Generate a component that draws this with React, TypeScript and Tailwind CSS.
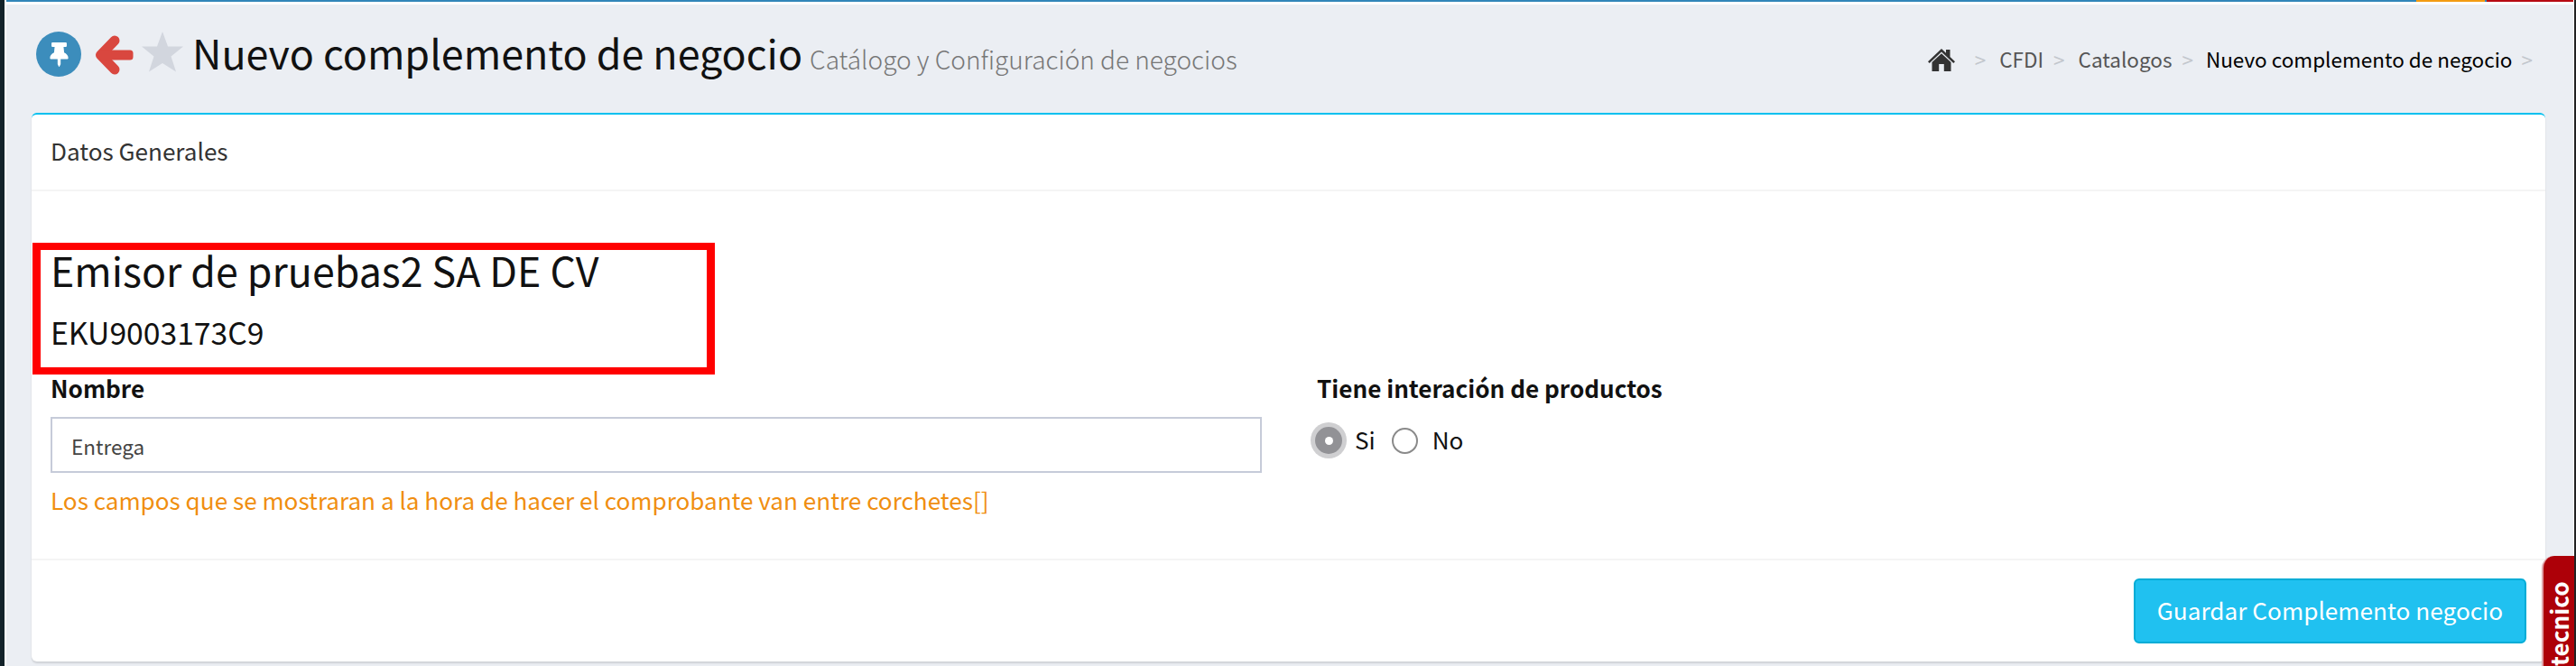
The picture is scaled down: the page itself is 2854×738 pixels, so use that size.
import React from "react";
import { FaThumbtack } from "react-icons/fa";

const crumbs = ["CFDI", "Catalogos"];

const Separator = () => <span className="text-[#c3c7cd]">&gt;</span>;

const ArrowIcon = () => (
  <svg className="mt-[4px] ml-[15px] h-[44px] w-[43px]" viewBox="0 0 43 44">
    <path
      d="M22 6L6.500 22l15.500 16"
      fill="none"
      stroke="#d9473f"
      strokeWidth="11"
      strokeLinecap="round"
      strokeLinejoin="round"
    />
    <path d="M7 16.500h32a3.500 3.500 0 0 1 3.500 3.500v4a3.500 3.500 0 0 1-3.500 3.500H7z" fill="#d9473f" />
  </svg>
);

const StarIcon = () => (
  <svg className="ml-[9px] h-[45px] w-[46px]" viewBox="0 0 46 45">
    <path
      d="M23 0l6 16.500h17L32.500 27.500l5.500 17L23 35 8 44.500l5.500-17L0 16.500h17z"
      fill="#d2d6de"
    />
  </svg>
);

const HomeIcon = () => (
  <svg className="mt-[5px] h-[25px] w-[30px]" viewBox="0 0 30 25" fill="#333">
    <path d="M15 0l5 4.800V1h4.500v8L30 14.200l-1.700 1.800L15 3.600 1.700 16 0 14.200z" />
    <path d="M15 5.200l10.500 9.800V25h-7.700v-8h-5.600v8H4.500V15z" />
  </svg>
);

const PageHeader = () => (
  <header className="flex h-[120px] justify-between pl-[40px] pr-[48px]">
    <div className="flex items-start pt-[30px]">
      <div className="flex size-[50px] items-center justify-center rounded-full bg-[#3c8dbc]">
        <FaThumbtack className="size-[27px] text-white" />
      </div>
      <ArrowIcon />
      <StarIcon />
      <h1 className="ml-[10px] text-[44.800px] leading-[45px] whitespace-nowrap">
        Nuevo complemento de negocio{" "}
        <small className="-ml-[2px] text-[28px] font-light text-[#777]">
          Catálogo y Configuración de negocios
        </small>
      </h1>
    </div>
    <nav className="flex items-start pt-[44px] text-[22.500px] leading-8 text-[#555]">
      <HomeIcon />
      <span className="ml-[22px]">
        <Separator />
      </span>
      {crumbs.map((crumb) => (
        <span key={crumb} className="ml-[15px] flex gap-[11px]">
          {crumb}
          <Separator />
        </span>
      ))}
      <span className="ml-[14px] flex gap-[10px] text-black">
        Nuevo complemento de negocio
        <Separator />
      </span>
    </nav>
  </header>
);

const Radios = () => (
  <div className="flex h-[40px] items-center text-[26.100px] leading-[38px]">
    <span className="flex size-[40px] items-center justify-center rounded-full bg-[#cfcfd1]">
      <span className="flex size-[30px] items-center justify-center rounded-full bg-[#929296]">
        <span className="size-[9px] rounded-full bg-white" />
      </span>
    </span>
    <span className="mb-[2px] ml-[9px]">Si</span>
    <span className="ml-[18px] size-[29px] rounded-full border-2 border-[#8a8a8a]" />
    <span className="mb-[2px] ml-[16px]">No</span>
  </div>
);

export default function App() {
  return (
    <div className="relative flex h-[738px] w-[2854px] flex-col overflow-hidden bg-[#ebeef3] font-['Noto_Sans_CJK_JP','Noto_Sans',sans-serif] text-[#111]">
      <div className="flex h-[5px] border-b-[3px] border-white bg-[#3186b8]">
        <div className="ml-[2677px] w-[76px] bg-[#f39c12]" />
        <div className="ml-[2px] w-[97px] bg-[#b70a12]" />
      </div>

      <PageHeader />

      <main className="ml-[35px] flex h-[608px] w-[2785px] flex-col rounded-[6px] border-t-2 border-[#00c0ef] bg-white shadow-[0_2px_2px_rgba(0,0,0,0.12)]">
        <h2 className="h-[85px] border-b-2 border-[#f4f4f4] pl-[21px] pt-[20px] text-[26.100px] leading-[40px] text-[#333]">
          Datos Generales
        </h2>

        <section className="flex h-[409px] flex-col border-b-2 border-[#f4f4f4] pl-[21px]">
          <h3 className="mt-[57px] text-[44.700px] leading-[60px]">
            Emisor de pruebas2 SA DE CV
          </h3>
          <h4 className="mt-[14px] text-[33.700px] leading-[50px]">EKU9003173C9</h4>

          <div className="mt-[17px] flex">
            <div className="w-[1342px]">
              <label className="block text-[26.100px] leading-[40px] font-bold">Nombre</label>
              <div className="mt-[12px] h-[62px] border-2 border-[#c6cbd9] pl-[21px] text-[22.500px] leading-[60px] text-[#444]">
                Entrega
              </div>
              <p className="mt-[10px] text-[26.100px] leading-[40px] text-[#f08e10]">
                Los campos que se mostraran a la hora de hacer el comprobante van entre corchetes[]
              </p>
            </div>
            <div className="ml-[54px]">
              <p className="ml-[7px] text-[26.100px] leading-[40px] font-bold">
                Tiene interación de productos
              </p>
              <div className="mt-[18px]">
                <Radios />
              </div>
            </div>
          </div>
        </section>

        <footer className="flex justify-end pr-[21px] pt-[20px]">
          <button className="h-[72px] w-[435px] rounded-[6px] border-2 border-[#00acd6] bg-[#20c1f0] pb-px text-[26.200px] text-white">
            Guardar Complemento negocio
          </button>
        </footer>
      </main>

      {/* Highlight around the issuer data */}
      <div className="absolute left-[36px] top-[269px] h-[146px] w-[756px] border-x-[9px] border-y-8 border-[#ff0000]" />

      {/* Window edges */}
      <div className="absolute inset-y-0 left-0 w-[7px] border-r-2 border-white bg-[#13232a]" />
      <div className="absolute inset-y-0 right-0 w-[3px] border-l border-white bg-[#222]" />

      {/* Support tab */}
      <div className="absolute left-[2816px] top-[616px] h-[122px] w-[36px] rounded-tl-[14px] border-l-2 border-[#e0a3a8] bg-[#ad0008] text-white">
        <div className="h-full w-[34px] rotate-180 pb-[30px] text-right text-[26.200px] leading-[34px] font-bold [writing-mode:vertical-rl]">
          tecnico
        </div>
      </div>
    </div>
  );
}
